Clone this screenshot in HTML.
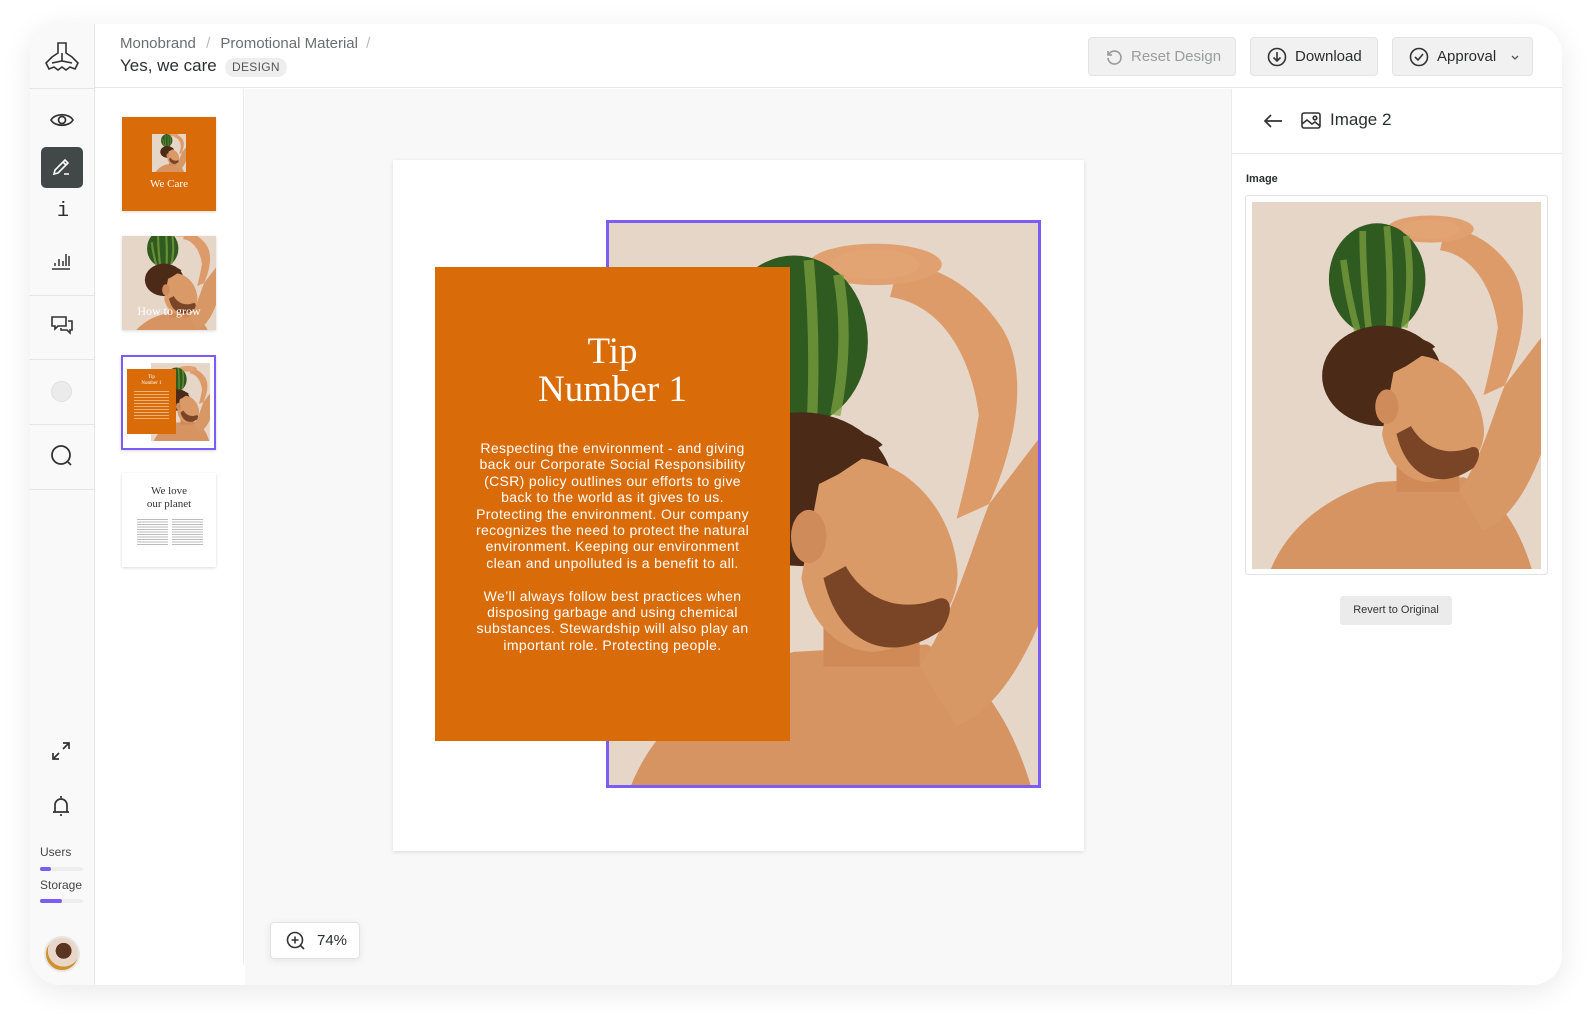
<!DOCTYPE html>
<html><head><meta charset="utf-8">
<style>
*{box-sizing:border-box;margin:0;padding:0}
body{width:1590px;height:1020px;background:#fff;font-family:"Liberation Sans",sans-serif;position:relative;overflow:hidden;color:#2b2d2e}
.abs{position:absolute}
.win{left:30px;top:24px;width:1532px;height:961px;border-radius:30px;background:#fff;box-shadow:0 6px 30px rgba(0,0,0,.09);overflow:hidden}
.sb{left:0;top:0;width:65px;height:961px;background:#f9f9f9;border-right:1px solid #e6e6e6}
.hd{left:65px;top:0;right:0;height:64px;border-bottom:1px solid #e6e6e6;background:#fff}
.btn{position:absolute;top:13px;height:39px;border:1px solid #e3e3e3;border-radius:4px;background:#f1f1f1;font-size:15px;display:flex;align-items:center;gap:8px;padding-left:16px}
.thumbcol{left:65px;top:65px;width:149px;height:876px;background:#fff;border-right:1px solid #ececec}
.canvas{left:215px;top:65px;width:986px;height:896px;background:#f8f8f8}
.rp{left:1201px;top:65px;width:331px;height:896px;background:#fff;border-left:1px solid #ececec}
.th{position:absolute;left:27px;width:94px;height:94px;box-shadow:0 1px 3px rgba(0,0,0,.15);overflow:hidden}
.sep{position:absolute;left:0;width:65px;height:1px;background:#e4e4e4}
.ic{position:absolute;left:20px}
</style></head><body>
<svg width="0" height="0" style="position:absolute">
<defs>
<symbol id="man" viewBox="0 0 300 380" preserveAspectRatio="xMidYMid slice">
<rect width="300" height="380" fill="#e6d6c8"/>
<path d="M20 380 C40 330 90 300 130 290 L220 285 C250 300 275 330 290 380Z" fill="#d69462"/>
<path d="M215 300 C240 260 250 220 262 190 L300 140 L300 260 C285 300 265 330 240 340Z" fill="#d89866"/>
<path d="M262 190 C280 150 290 100 270 70 C250 40 220 25 200 30 L195 50 C230 55 250 90 255 130 C250 160 245 180 240 200Z" fill="#dc9b69"/>
<ellipse cx="185" cy="28" rx="45" ry="14" fill="#e0a070"/>
<ellipse cx="130" cy="80" rx="50" ry="58" fill="#2f5a20"/>
<path d="M95 60 Q100 100 110 135 M115 30 Q115 80 122 138 M140 25 Q145 80 142 138 M160 35 Q168 80 158 130" stroke="#7fa240" stroke-width="7" fill="none" opacity=".7"/>
<ellipse cx="185" cy="28" rx="30" ry="10" fill="#e3a474"/>
<path d="M150 250 L150 300 L215 300 L215 240Z" fill="#cf8a58"/>
<ellipse cx="135" cy="180" rx="62" ry="52" fill="#4b2a17"/>
<path d="M150 160 C200 150 235 190 240 230 C245 260 220 285 185 290 C160 290 140 270 135 240Z" fill="#d99a68"/>
<path d="M150 240 C160 285 195 300 230 275 C240 260 235 250 225 255 C205 262 180 258 165 232Z" fill="#7a4526"/>
<path d="M120 190 C115 140 170 130 190 150 L160 170 Z" fill="#4b2a17"/>
<ellipse cx="140" cy="212" rx="12" ry="18" fill="#cf8b5a"/>
</symbol>
</defs>
</svg>

<div class="abs win">
 <div class="abs sb">
  <svg class="ic" style="left:15px;top:17px" width="34" height="32" viewBox="0 0 34 32" fill="none" stroke="#333" stroke-width="1.6"><path d="M13 2h8v10l6 4 6 6-3 6-5-2-4 3-4-3-4 3-4-3-5 2-3-6 6-6 6-4z"/><path d="M17 12v8M7 22l10-2 10 2"/></svg>
  <div class="sep" style="top:64px"></div>
  <svg class="ic" style="top:87px" width="24" height="18" viewBox="0 0 24 18" fill="none" stroke="#333" stroke-width="1.7"><path d="M1 9C5 2 19 2 23 9C19 16 5 16 1 9Z"/><circle cx="12" cy="9" r="3.5"/></svg>
  <div class="abs" style="left:11px;top:123px;width:42px;height:41px;background:#424747;border-radius:5px"></div>
  <svg class="abs" style="left:22px;top:133px" width="20" height="20" viewBox="0 0 20 20" fill="none" stroke="#fff" stroke-width="1.6"><path d="M2 17l1-4L13 3l3 3L6 16z M11 5l3 3 M12 17h5"/></svg>
  <div class="abs" style="left:27px;top:176px;font-size:20px;font-family:'Liberation Mono',monospace">i</div>
  <svg class="ic" style="top:226px" width="22" height="20" viewBox="0 0 22 20" fill="none" stroke="#333" stroke-width="1.5"><path d="M5 13v3M9 9v7M13 11v5M16 4v12M19 6v10M2 19h18"/></svg>
  <div class="sep" style="top:271px"></div>
  <svg class="ic" style="top:291px" width="24" height="20" viewBox="0 0 24 20" fill="none" stroke="#333" stroke-width="1.6"><path d="M2 2h14v9H8l-3 3v-3H2z M18 6h4v9h-2v3l-3-3h-6v-2"/></svg>
  <div class="sep" style="top:335px"></div>
  <div class="abs" style="left:21px;top:357px;width:21px;height:21px;border-radius:50%;background:#ebebeb;border:1px solid #e0e0e0"></div>
  <div class="sep" style="top:400px"></div>
  <svg class="ic" style="top:420px" width="24" height="24" viewBox="0 0 24 24" fill="none" stroke="#333" stroke-width="1.8"><circle cx="11" cy="11" r="9"/><path d="M18 18l3 3"/></svg>
  <div class="sep" style="top:465px"></div>
  <svg class="ic" style="top:716px" width="22" height="22" viewBox="0 0 22 22" fill="none" stroke="#333" stroke-width="1.7"><path d="M13 3h6v6M19 3l-6 6M9 19H3v-6M3 19l6-6"/></svg>
  <svg class="ic" style="top:770px" width="22" height="24" viewBox="0 0 22 24" fill="none" stroke="#333" stroke-width="1.7"><path d="M11 2v2M5 18V11a6 6 0 0112 0v7M3 18h16M11 20v2"/></svg>
  <div class="abs" style="left:10px;top:821px;font-size:12px;color:#444">Users</div>
  <div class="abs" style="left:10px;top:843px;width:43px;height:4px;border-radius:2px;background:#eee"><div style="width:11px;height:4px;border-radius:2px;background:#7b5cf5"></div></div>
  <div class="abs" style="left:10px;top:854px;font-size:12px;color:#444">Storage</div>
  <div class="abs" style="left:10px;top:875px;width:43px;height:4px;border-radius:2px;background:#eee"><div style="width:22px;height:4px;border-radius:2px;background:#7b5cf5"></div></div>
  <div class="abs" style="left:14px;top:912px;width:36px;height:36px;border-radius:50%;border:2px solid #e6e6e6;background:radial-gradient(circle at 55% 40%,#5a3522 0 30%,#e8d6c8 31% 60%,#d0902c 61%);overflow:hidden"></div>
 </div>

 <div class="abs hd">
  <div class="abs" style="left:25px;top:11px;font-size:15px;color:#6b6e70">Monobrand <span style="color:#bbb;margin:0 6px">/</span> Promotional Material <span style="color:#bbb;margin:0 4px">/</span></div>
  <div class="abs" style="left:25px;top:32px;font-size:17px;color:#2d2f30">Yes, we care</div>
  <div class="abs" style="left:130px;top:34px;height:19px;padding:0 7px;border-radius:10px;background:#eeeeee;font-size:12px;color:#555;line-height:19px;letter-spacing:.3px">DESIGN</div>
  <div class="btn" style="left:993px;width:148px;color:#9a9c9e"><svg width="18" height="18" viewBox="0 0 18 18" fill="none" stroke="#999" stroke-width="1.6"><path d="M3 3v4h4M3.5 7A6.5 6.5 0 1 1 3 10"/></svg>Reset Design</div>
  <div class="btn" style="left:1155px;width:128px;color:#2b2d2e"><svg width="20" height="20" viewBox="0 0 20 20" fill="none" stroke="#333" stroke-width="1.6"><circle cx="10" cy="10" r="8.5"/><path d="M10 5v9M6.5 10.5L10 14l3.5-3.5"/></svg>Download</div>
  <div class="btn" style="left:1297px;width:141px;color:#2b2d2e"><svg width="20" height="20" viewBox="0 0 20 20" fill="none" stroke="#333" stroke-width="1.6"><circle cx="10" cy="10" r="8.5"/><path d="M6 10l3 3 5-6"/></svg>Approval<svg style="margin-left:6px" width="10" height="8" viewBox="0 0 10 8" fill="none" stroke="#555" stroke-width="1.3"><path d="M2 3l3 3 3-3"/></svg></div>
 </div>

 <div class="abs thumbcol">
  <div class="th" style="top:28px;background:#d96b08">
   <svg class="abs" style="left:30px;top:17px" width="34" height="38"><use href="#man"/></svg>
   <div class="abs" style="left:0;right:0;top:61px;text-align:center;font-family:'Liberation Serif',serif;font-size:11px;color:#fff">We Care</div>
  </div>
  <div class="th" style="top:147px;background:#d8c9c0">
   <svg width="94" height="94"><use href="#man"/></svg>
   <div class="abs" style="left:0;right:0;top:68px;text-align:center;font-family:'Liberation Serif',serif;font-size:12px;color:#fff">How to grow</div>
  </div>
  <div class="th" style="top:266px;background:#fff;border:2px solid #7b5cf5;left:26px;width:95px;height:95px">
   <svg class="abs" style="left:28px;top:6px" width="59" height="78"><use href="#man"/></svg>
   <div class="abs" style="left:4px;top:12px;width:49px;height:65px;background:#d96b08"></div>
   <div class="abs" style="left:4px;top:18px;width:49px;text-align:center;font-family:'Liberation Serif',serif;font-size:5px;color:#fff;line-height:6px">Tip<br>Number 1</div>
   <div class="abs" style="left:11px;top:34px;width:35px;height:30px;background:repeating-linear-gradient(#f0b07a 0 1px,transparent 1px 3px)"></div>
  </div>
  <div class="th" style="top:384px;background:#fff">
   <div class="abs" style="left:0;right:0;top:12px;text-align:center;font-family:'Liberation Serif',serif;font-size:11px;line-height:13px;color:#333">We love<br>our planet</div>
   <div class="abs" style="left:15px;top:46px;width:31px;height:26px;background:repeating-linear-gradient(#bbb 0 1px,transparent 1px 2.5px)"></div>
   <div class="abs" style="left:50px;top:46px;width:31px;height:27px;background:repeating-linear-gradient(#bbb 0 1px,transparent 1px 2.5px)"></div>
  </div>
 </div>

 <div class="abs canvas">
  <div class="abs" style="left:148px;top:71px;width:691px;height:691px;background:#fff;box-shadow:0 1px 4px rgba(0,0,0,.12)">
   <div class="abs" style="left:213px;top:60px;width:435px;height:568px;border:3px solid #7b5cf5;overflow:hidden">
    <svg width="429" height="562"><use href="#man"/></svg>
   </div>
   <div class="abs" style="left:42px;top:107px;width:355px;height:474px;background:#d96b08;color:#fff;text-align:center">
    <div style="font-family:'Liberation Serif',serif;font-size:37px;line-height:38px;margin-top:66px">Tip<br>Number 1</div>
    <div style="font-size:14px;line-height:16.4px;margin:31px auto 0;width:285px;letter-spacing:.35px">Respecting the environment - and giving back our Corporate Social Responsibility (CSR) policy outlines our efforts to give back to the world as it gives to us. Protecting the environment. Our company recognizes the need to protect the natural environment. Keeping our environment clean and unpolluted is a benefit to all.<br><br>We’ll always follow best practices when disposing garbage and using chemical substances. Stewardship will also play an important role. Protecting people.</div>
   </div>
  </div>
  <div class="abs" style="left:25px;top:833px;width:90px;height:37px;background:#fff;border:1px solid #e2e2e2;border-radius:4px;box-shadow:0 2px 8px rgba(0,0,0,.08);display:flex;align-items:center;gap:11px;padding-left:15px;font-size:15px">
   <svg width="20" height="20" viewBox="0 0 20 20" fill="none" stroke="#333" stroke-width="1.6"><circle cx="9" cy="9" r="7.5"/><path d="M14.5 14.5L18 18M9 5.5v7M5.5 9h7"/></svg>74%</div>
 </div>

 <div class="abs rp">
  <svg class="abs" style="left:31px;top:24px" width="20" height="16" viewBox="0 0 20 16" fill="none" stroke="#333" stroke-width="1.7"><path d="M19 8H2M8 2L2 8l6 6"/></svg>
  <svg class="abs" style="left:69px;top:23px" width="20" height="17" viewBox="0 0 20 17" fill="none" stroke="#333" stroke-width="1.6"><rect x="1" y="1" width="18" height="15" rx="2"/><path d="M1 12l5-4 5 4 3-2 5 4"/><circle cx="14" cy="6" r="1.8"/></svg>
  <div class="abs" style="left:98px;top:21px;font-size:17px">Image 2</div>
  <div class="abs" style="left:0;right:0;top:64px;height:1px;background:#e8e8e8"></div>
  <div class="abs" style="left:14px;top:84px;font-size:11px;font-weight:bold">Image</div>
  <div class="abs" style="left:13px;top:106px;width:303px;height:380px;border:1px solid #e3e3e3;border-radius:3px">
   <svg class="abs" style="left:6px;top:6px" width="289" height="367"><use href="#man"/></svg>
  </div>
  <div class="abs" style="left:108px;top:507px;width:112px;height:29px;background:#ebebeb;border-radius:3px;font-size:11px;line-height:29px;text-align:center;color:#333">Revert to Original</div>
 </div>
</div>
</body></html>
